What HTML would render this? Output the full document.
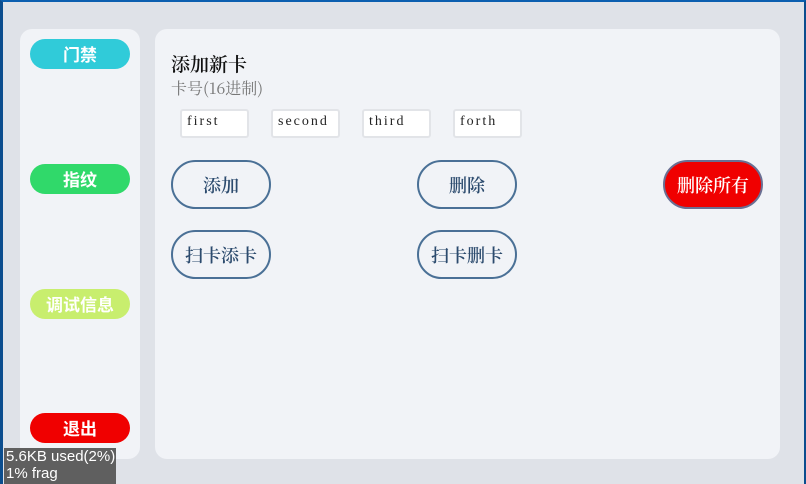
<!DOCTYPE html>
<html><head><meta charset="utf-8"><style>
*{margin:0;padding:0;box-sizing:border-box}
body{width:806px;height:484px;background:#dfe2e8;position:relative;overflow:hidden;font-family:"Noto Serif CJK SC","Liberation Serif",serif}
.frame{position:absolute;left:0;top:0;width:806px;height:484px;border-top:2px solid #0b5fb0;border-left:3px solid #0b4d8e;border-right:2px solid #0b4d8e}
.side{position:absolute;left:20px;top:29px;width:120px;height:430px;background:#f1f3f7;border-radius:12px}
.sb{position:absolute;left:30px;width:100px;height:30px;border-radius:15px;color:#fff;font:bold 17px "Liberation Sans","Noto Sans CJK SC",sans-serif;text-align:center;line-height:33px}
.main{position:absolute;left:155px;top:29px;width:625px;height:430px;background:#f1f3f7;border-radius:12px}
.t1{position:absolute;left:171px;top:50px;font-size:19px;color:#111;font-weight:600}
.t2{position:absolute;left:171px;top:76px;font-size:16px;color:#777}
.in{position:absolute;top:109px;width:69px;height:29px;background:#fff;border:2px solid #e2e4e8;border-radius:3px;font:14px "Liberation Serif",serif;letter-spacing:2px;color:#222;padding:3px 5px}
.b{position:absolute;width:100px;height:49px;border:2px solid #4a7096;border-radius:25px;color:#2c4b6e;font-size:18px;font-weight:600;text-align:center;line-height:47px}
.stat{position:absolute;left:4px;top:448px;width:112px;height:36px;background:#5f5f5f;color:#fff;font:15px "Liberation Sans",sans-serif;line-height:17px;padding-left:2px}
</style></head><body>
<div class="frame"></div>
<div class="side"></div>
<div class="sb" style="top:39px;background:#30cbd9">门禁</div>
<div class="sb" style="top:164px;background:#30d96a">指纹</div>
<div class="sb" style="top:289px;background:#c8ee6e">调试信息</div>
<div class="sb" style="top:413px;background:#f00000">退出</div>
<div class="main"></div>
<div class="t1">添加新卡</div>
<div class="t2">卡号(16进制)</div>
<div class="in" style="left:180px">first</div>
<div class="in" style="left:271px">second</div>
<div class="in" style="left:362px">third</div>
<div class="in" style="left:453px">forth</div>
<div class="b" style="left:171px;top:160px">添加</div>
<div class="b" style="left:417px;top:160px">删除</div>
<div class="b" style="left:663px;top:160px;background:#f00000;color:#fff;border-color:#6a6f93">删除所有</div>
<div class="b" style="left:171px;top:230px">扫卡添卡</div>
<div class="b" style="left:417px;top:230px">扫卡删卡</div>
<div class="stat">5.6KB used(2%)<br>1% frag</div>
</body></html>
